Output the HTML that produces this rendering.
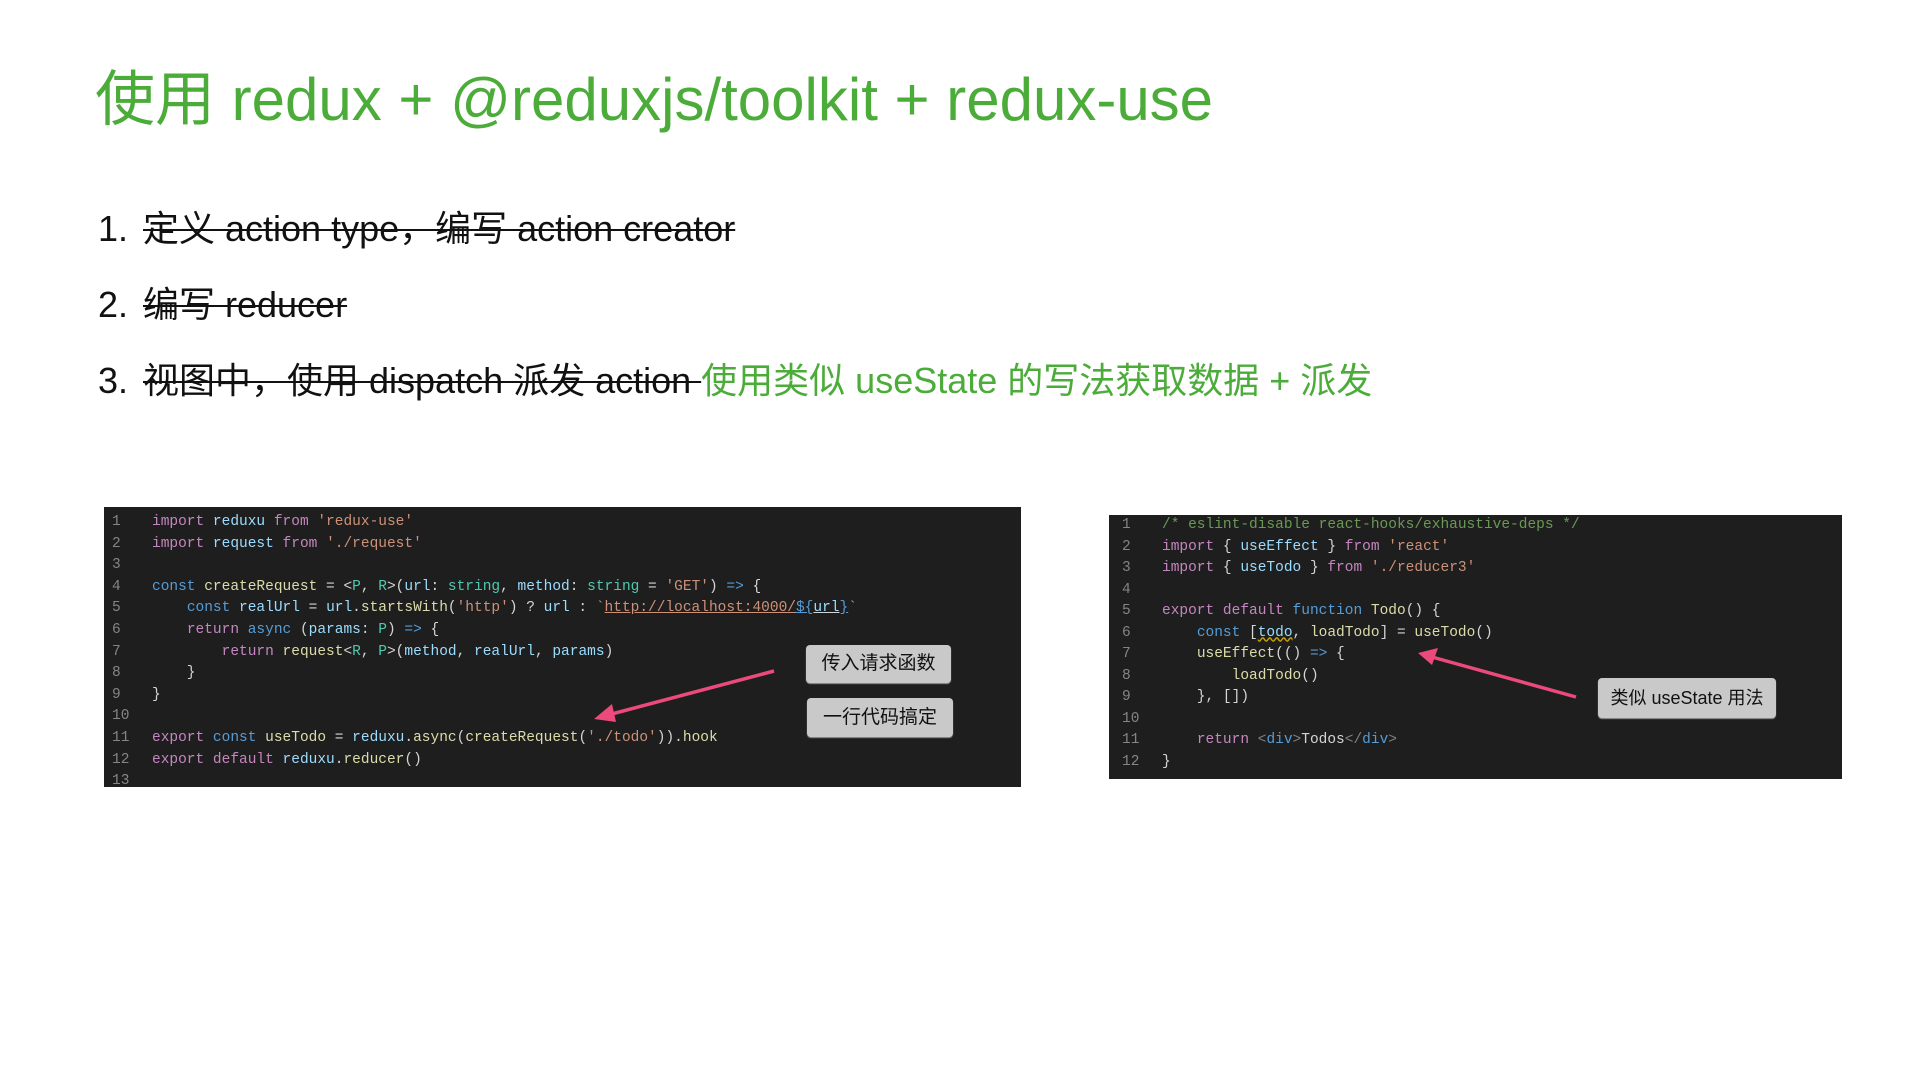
<!DOCTYPE html>
<html><head><meta charset="utf-8"><style>
body{margin:0;width:1920px;height:1080px;background:#fff;position:relative;overflow:hidden;font-family:"Liberation Sans","Noto Sans CJK SC",sans-serif}
.t{position:absolute;left:95px;top:64px;font-size:60px;color:#4cac3a;white-space:nowrap;letter-spacing:0;line-height:72px}
.li{position:absolute;left:98px;font-size:36px;color:#111;white-space:nowrap;line-height:40px}
.n{display:inline-block;width:45px}
.s{text-decoration:line-through;text-decoration-thickness:2px}
.g{color:#4cac3a}
.code{position:absolute;background:#1e1e1e;font-family:"Liberation Mono",monospace;font-size:14.5px;color:#d4d4d4;white-space:pre}
.ln{position:absolute;color:#858585}
.l{position:absolute;height:21.6px;line-height:21.6px}
.k{color:#c586c0}.b{color:#569cd6}.st{color:#ce9178}.v{color:#9cdcfe}.f{color:#dcdcaa}.ty{color:#4ec9b0}.c{color:#6a9955}
.tag{position:absolute;background:#c9c9c9;border-radius:4px;font-size:19px;color:#111;text-align:center;box-shadow:0 1px 1px #999}
</style></head><body>
<div class="t">使用 redux + @reduxjs/toolkit + redux-use</div>
<div class="li" style="top:209px"><span class="n">1.</span><span class="s">定义 action type，编写 action creator</span></div>
<div class="li" style="top:285px"><span class="n">2.</span><span class="s">编写 reducer</span></div>
<div class="li" style="top:361px"><span class="n">3.</span><span class="s">视图中，使用 dispatch 派发 action </span><span class="g"> 使用类似 useState 的写法获取数据 + 派发</span></div>

<div class="code" style="left:104px;top:507px;width:917px;height:280px">
<div class="ln" style="left:8px;top:5px;line-height:21.6px">1
2
3
4
5
6
7
8
9
10
11
12
13</div>
<div class="l" style="left:48px;top:5px"><span class="k">import</span> <span class="v">reduxu</span> <span class="k">from</span> <span class="st">'redux-use'</span></div>
<div class="l" style="left:48px;top:26.6px"><span class="k">import</span> <span class="v">request</span> <span class="k">from</span> <span class="st">'./request'</span></div>
<div class="l" style="left:48px;top:69.8px"><span class="b">const</span> <span class="f">createRequest</span> = &lt;<span class="ty">P</span>, <span class="ty">R</span>&gt;(<span class="v">url</span>: <span class="ty">string</span>, <span class="v">method</span>: <span class="ty">string</span> = <span class="st">'GET'</span>) <span class="b">=&gt;</span> {</div>
<div class="l" style="left:48px;top:91.4px">    <span class="b">const</span> <span class="v">realUrl</span> = <span class="v">url</span>.<span class="f">startsWith</span>(<span class="st">'http'</span>) ? <span class="v">url</span> : <span class="st">`<u>http://localhost:4000/</u></span><span class="b"><u>${</u></span><u><span class="v">url</span></u><span class="b"><u>}</u></span><span class="st">`</span></div>
<div class="l" style="left:48px;top:113px">    <span class="k">return</span> <span class="b">async</span> (<span class="v">params</span>: <span class="ty">P</span>) <span class="b">=&gt;</span> {</div>
<div class="l" style="left:48px;top:134.6px">        <span class="k">return</span> <span class="f">request</span>&lt;<span class="ty">R</span>, <span class="ty">P</span>&gt;(<span class="v">method</span>, <span class="v">realUrl</span>, <span class="v">params</span>)</div>
<div class="l" style="left:48px;top:156.2px">    }</div>
<div class="l" style="left:48px;top:177.8px">}</div>
<div class="l" style="left:48px;top:221px"><span class="k">export</span> <span class="b">const</span> <span class="f">useTodo</span> = <span class="v">reduxu</span>.<span class="f">async</span>(<span class="f">createRequest</span>(<span class="st">'./todo'</span>)).<span class="f">hook</span></div>
<div class="l" style="left:48px;top:242.6px"><span class="k">export</span> <span class="k">default</span> <span class="v">reduxu</span>.<span class="f">reducer</span>()</div>
</div>

<div class="code" style="left:1109px;top:515px;width:733px;height:264px">
<div class="ln" style="left:13px;top:0px;line-height:21.5px">1
2
3
4
5
6
7
8
9
10
11
12</div>
<div class="l" style="left:53px;top:0px"><span class="c">/* eslint-disable react-hooks/exhaustive-deps */</span></div>
<div class="l" style="left:53px;top:21.5px"><span class="k">import</span> { <span class="v">useEffect</span> } <span class="k">from</span> <span class="st">'react'</span></div>
<div class="l" style="left:53px;top:43px"><span class="k">import</span> { <span class="v">useTodo</span> } <span class="k">from</span> <span class="st">'./reducer3'</span></div>
<div class="l" style="left:53px;top:86px"><span class="k">export</span> <span class="k">default</span> <span class="b">function</span> <span class="f">Todo</span>() {</div>
<div class="l" style="left:53px;top:107.5px">    <span class="b">const</span> [<span class="v" style="text-decoration:underline wavy #c9a400">todo</span>, <span class="f">loadTodo</span>] = <span class="f">useTodo</span>()</div>
<div class="l" style="left:53px;top:129px">    <span class="f">useEffect</span>(() <span class="b">=&gt;</span> {</div>
<div class="l" style="left:53px;top:150.5px">        <span class="f">loadTodo</span>()</div>
<div class="l" style="left:53px;top:172px">    }, [])</div>
<div class="l" style="left:53px;top:215px">    <span class="k">return</span> <span style="color:#808080">&lt;</span><span class="b">div</span><span style="color:#808080">&gt;</span>Todos<span style="color:#808080">&lt;/</span><span class="b">div</span><span style="color:#808080">&gt;</span></div>
<div class="l" style="left:53px;top:236.5px">}</div>
</div>

<div class="tag" style="left:806px;top:645px;width:145px;height:38px;line-height:38px">传入请求函数</div>
<div class="tag" style="left:807px;top:698px;width:146px;height:39px;line-height:39px">一行代码搞定</div>
<div class="tag" style="left:1598px;top:678px;width:178px;height:40px;line-height:40px;font-size:18px">类似 useState 用法</div>

<svg width="1920" height="1080" style="position:absolute;left:0;top:0">
<line x1="774" y1="671" x2="608" y2="715" stroke="#ec4a7c" stroke-width="3.5"/>
<polygon points="594,719 612,704 616,722" fill="#ec4a7c"/>
<line x1="1576" y1="697" x2="1432" y2="657" stroke="#ec4a7c" stroke-width="3.5"/>
<polygon points="1418,653 1438,648 1432,665" fill="#ec4a7c"/>
</svg>
</body></html>
